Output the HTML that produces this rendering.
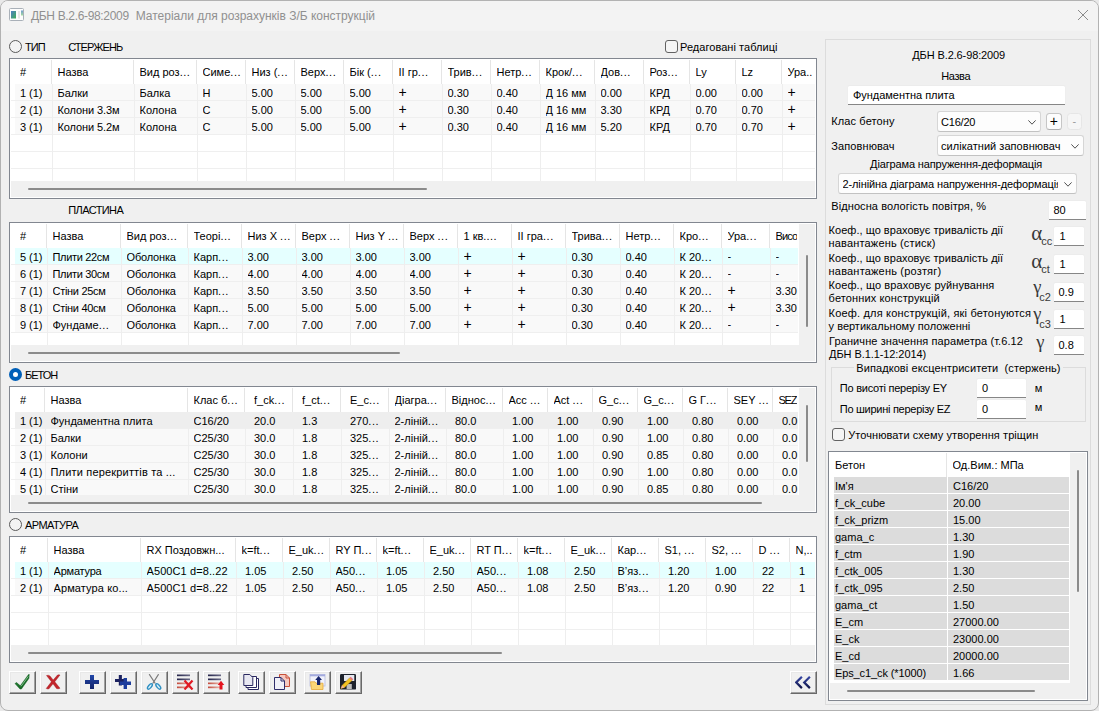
<!DOCTYPE html><html lang="uk"><head><meta charset="utf-8"><title>ДБН В.2.6-98:2009</title><style>
*{box-sizing:border-box;margin:0;padding:0}
html,body{width:1099px;height:711px;overflow:hidden;background:#e9e9e9;}
body{font-family:"Liberation Sans","DejaVu Sans",sans-serif;font-size:11px;color:#000;position:relative;line-height:13px}
.a{position:absolute;white-space:nowrap}
#win{position:absolute;left:0;top:0;width:1099px;height:711px;background:#f0f0f0;border:1px solid #b2b2b2;border-radius:8px;overflow:hidden}
#tb{position:absolute;left:0;top:0;width:1097px;height:30px;background:#f3f3f3}
#title{position:absolute;left:30px;top:7.5px;font-size:12px;line-height:15px;color:#909090;white-space:pre}
.fr{position:absolute;border:1px solid #828790;background:#fff;overflow:hidden}
.c{position:absolute;white-space:pre;overflow:hidden;height:17px;line-height:13px;padding-top:3px}
.h{position:absolute;white-space:pre;overflow:hidden;height:24px;line-height:13px;padding-top:6px}
.pl{font-size:14px;line-height:13px;position:relative;top:-0.7px;left:0px}
.d{letter-spacing:0.55px}
.vl{position:absolute;width:1px;background:#eeeeee}
.hl{position:absolute;height:1px;background:#efefef}
.hs{position:absolute;width:1px;background:#e5e5e5}
.rb{position:absolute;height:16px;background:#f9f9f9}
.sb{position:absolute;background:#f0f0f0}
.th{position:absolute;background:#8b8b8b;border-radius:1px}
.radio{position:absolute;width:13px;height:13px;border:1px solid #5a5a5a;border-radius:50%;background:#f3f3f3}
.radio.on{border:4px solid #005fb8;background:#fff;}
.chk{position:absolute;width:13px;height:13px;border:1px solid #626262;border-radius:3px;background:#f5f5f5}
.inp{position:absolute;background:#fff;border-bottom:1px solid #868686;border-radius:1.5px 1.5px 0.5px 0.5px;padding-left:5px;white-space:nowrap;box-shadow:0 -0.5px 0 0.5px #ececec}
.cmb{position:absolute;background:#fdfdfd;border:1px solid #d6d6d6;border-bottom-color:#c2c2c2;border-radius:3px;white-space:nowrap;overflow:hidden}
.btn3{position:absolute;width:27px;height:23px;background:#f0f0f0;border-top:1px solid #fff;border-left:1px solid #fff;border-right:1px solid #696969;border-bottom:1px solid #696969;box-shadow:inset -1px -1px 0 #a0a0a0, inset 1px 1px 0 #e8e8e8}
.btn3 svg{position:absolute;left:4px;top:2px}
</style></head><body><div id="win">
<div id="tb"></div>
<svg class="a" style="left:8px;top:7px" width="15" height="13" viewBox="0 0 15 13">
<defs><linearGradient id="g1" x1="0" y1="0" x2="1" y2="1"><stop offset="0" stop-color="#4f7fc4"/><stop offset="1" stop-color="#3fae57"/></linearGradient>
<linearGradient id="g2" x1="0" y1="0" x2="0" y2="1"><stop offset="0" stop-color="#6f9bd0"/><stop offset="1" stop-color="#a5dca0"/></linearGradient></defs>
<rect x="0.5" y="0.5" width="14" height="12" rx="1" fill="#fdfdfd" stroke="#a9b0b8"/>
<rect x="2" y="3" width="5" height="7.500" fill="url(#g1)"/><rect x="9" y="3" width="2" height="7.500" fill="#e6e6e6"/><rect x="12" y="2.500" width="2" height="5" fill="url(#g2)"/></svg>
<div id="title"><span style="letter-spacing:-0.333px">ДБН В.2.6-98:2009</span><span style="position:absolute;left:104.75px;top:0;letter-spacing:-0.013px">Матеріали для розрахунків З/Б конструкцій</span></div>
<svg class="a" style="left:1076px;top:8px" width="12" height="12" viewBox="0 0 12 12"><path d="M1 1 L11 11 M11 1 L1 11" stroke="#8a8a8a" stroke-width="1" fill="none"/></svg>
<div class="radio" style="left:8px;top:39px;"></div>
<div class="a" style="left:24px;top:40px;letter-spacing:-0.916px;">ТИП</div>
<div class="a" style="left:67.2px;top:40px;letter-spacing:-0.939px;">СТЕРЖЕНЬ</div>
<div class="chk" style="left:664px;top:39px;"></div>
<div class="a" style="left:679px;top:40px;letter-spacing:0.043px;">Редаговані таблиці</div>
<div class="fr" style="left:8px;top:57px;width:808px;height:141px">
<div class="h" style="left:9.9px;top:1px;width:30.1px">#</div>
<div class="hs" style="left:41px;top:1px;height:24px"></div>
<div class="h" style="left:47.5px;top:1px;width:74.5px">Назва</div>
<div class="hs" style="left:123px;top:1px;height:24px"></div>
<div class="h" style="left:129.5px;top:1px;width:55.5px">Вид роз<span class="d">...</span></div>
<div class="hs" style="left:186px;top:1px;height:24px"></div>
<div class="h" style="left:192.5px;top:1px;width:41.5px">Симе<span class="d">...</span></div>
<div class="hs" style="left:235px;top:1px;height:24px"></div>
<div class="h" style="left:241.5px;top:1px;width:41.5px">Низ (<span class="d">...</span></div>
<div class="hs" style="left:284px;top:1px;height:24px"></div>
<div class="h" style="left:290.5px;top:1px;width:41.5px">Верх<span class="d">...</span></div>
<div class="hs" style="left:333px;top:1px;height:24px"></div>
<div class="h" style="left:339.5px;top:1px;width:41.5px">Бік (<span class="d">...</span></div>
<div class="hs" style="left:382px;top:1px;height:24px"></div>
<div class="h" style="left:388.5px;top:1px;width:41.5px">II гр<span class="d">...</span></div>
<div class="hs" style="left:431px;top:1px;height:24px"></div>
<div class="h" style="left:437.5px;top:1px;width:41.5px">Трив<span class="d">...</span></div>
<div class="hs" style="left:480px;top:1px;height:24px"></div>
<div class="h" style="left:486.5px;top:1px;width:41.5px">Нетр<span class="d">...</span></div>
<div class="hs" style="left:529px;top:1px;height:24px"></div>
<div class="h" style="left:535.5px;top:1px;width:47.5px">Крок/<span class="d">...</span></div>
<div class="hs" style="left:584px;top:1px;height:24px"></div>
<div class="h" style="left:590.5px;top:1px;width:41.5px">Дов<span class="d">...</span></div>
<div class="hs" style="left:633px;top:1px;height:24px"></div>
<div class="h" style="left:639.5px;top:1px;width:38.5px">Роз<span class="d">...</span></div>
<div class="hs" style="left:679px;top:1px;height:24px"></div>
<div class="h" style="left:685.5px;top:1px;width:38.5px">Ly</div>
<div class="hs" style="left:725px;top:1px;height:24px"></div>
<div class="h" style="left:731.5px;top:1px;width:38.5px">Lz</div>
<div class="hs" style="left:771px;top:1px;height:24px"></div>
<div class="h" style="left:777.5px;top:1px;width:26.5px">Ура..</div>
<div class="rb" style="left:5px;top:25px;width:800px;height:16px;background:#f9f9f9"></div>
<div class="hl" style="left:1px;top:41px;width:804px"></div>
<div class="rb" style="left:5px;top:42px;width:800px;height:16px;background:#f9f9f9"></div>
<div class="hl" style="left:1px;top:58px;width:804px"></div>
<div class="rb" style="left:5px;top:59px;width:800px;height:16px;background:#f9f9f9"></div>
<div class="hl" style="left:1px;top:75px;width:804px"></div>
<div class="hl" style="left:1px;top:92px;width:804px"></div>
<div class="hl" style="left:1px;top:109px;width:804px"></div>
<div class="vl" style="left:42px;top:25px;height:97px"></div>
<div class="vl" style="left:124px;top:25px;height:97px"></div>
<div class="vl" style="left:187px;top:25px;height:97px"></div>
<div class="vl" style="left:236px;top:25px;height:97px"></div>
<div class="vl" style="left:285px;top:25px;height:97px"></div>
<div class="vl" style="left:334px;top:25px;height:97px"></div>
<div class="vl" style="left:383px;top:25px;height:97px"></div>
<div class="vl" style="left:432px;top:25px;height:97px"></div>
<div class="vl" style="left:481px;top:25px;height:97px"></div>
<div class="vl" style="left:530px;top:25px;height:97px"></div>
<div class="vl" style="left:585px;top:25px;height:97px"></div>
<div class="vl" style="left:634px;top:25px;height:97px"></div>
<div class="vl" style="left:680px;top:25px;height:97px"></div>
<div class="vl" style="left:726px;top:25px;height:97px"></div>
<div class="vl" style="left:772px;top:25px;height:97px"></div>
<div class="c" style="left:9.9px;top:25px;width:31.1px;height:17px">1 (1)</div>
<div class="c" style="left:47.5px;top:25px;width:75.5px;height:17px">Балки</div>
<div class="c" style="left:129.5px;top:25px;width:56.5px;height:17px">Балка</div>
<div class="c" style="left:192.5px;top:25px;width:42.5px;height:17px">Н</div>
<div class="c" style="left:241.5px;top:25px;width:42.5px;height:17px">5.00</div>
<div class="c" style="left:290.5px;top:25px;width:42.5px;height:17px">5.00</div>
<div class="c" style="left:339.5px;top:25px;width:42.5px;height:17px">5.00</div>
<div class="c" style="left:388.5px;top:25px;width:42.5px;height:17px"><span class="pl">+</span></div>
<div class="c" style="left:437.5px;top:25px;width:42.5px;height:17px">0.30</div>
<div class="c" style="left:486.5px;top:25px;width:42.5px;height:17px">0.40</div>
<div class="c" style="left:535.5px;top:25px;width:48.5px;height:17px">Д 16 мм</div>
<div class="c" style="left:590.5px;top:25px;width:42.5px;height:17px">0.00</div>
<div class="c" style="left:639.5px;top:25px;width:39.5px;height:17px">КРД</div>
<div class="c" style="left:685.5px;top:25px;width:39.5px;height:17px">0.00</div>
<div class="c" style="left:731.5px;top:25px;width:39.5px;height:17px">0.00</div>
<div class="c" style="left:777.5px;top:25px;width:27.5px;height:17px"><span class="pl">+</span></div>
<div class="c" style="left:9.9px;top:42px;width:31.1px;height:17px">2 (1)</div>
<div class="c" style="left:47.5px;top:42px;width:75.5px;height:17px"><span style="letter-spacing:-0.098px">Колони 3.3м</span></div>
<div class="c" style="left:129.5px;top:42px;width:56.5px;height:17px">Колона</div>
<div class="c" style="left:192.5px;top:42px;width:42.5px;height:17px">С</div>
<div class="c" style="left:241.5px;top:42px;width:42.5px;height:17px">5.00</div>
<div class="c" style="left:290.5px;top:42px;width:42.5px;height:17px">5.00</div>
<div class="c" style="left:339.5px;top:42px;width:42.5px;height:17px">5.00</div>
<div class="c" style="left:388.5px;top:42px;width:42.5px;height:17px"><span class="pl">+</span></div>
<div class="c" style="left:437.5px;top:42px;width:42.5px;height:17px">0.30</div>
<div class="c" style="left:486.5px;top:42px;width:42.5px;height:17px">0.40</div>
<div class="c" style="left:535.5px;top:42px;width:48.5px;height:17px">Д 16 мм</div>
<div class="c" style="left:590.5px;top:42px;width:42.5px;height:17px">3.30</div>
<div class="c" style="left:639.5px;top:42px;width:39.5px;height:17px">КРД</div>
<div class="c" style="left:685.5px;top:42px;width:39.5px;height:17px">0.70</div>
<div class="c" style="left:731.5px;top:42px;width:39.5px;height:17px">0.70</div>
<div class="c" style="left:777.5px;top:42px;width:27.5px;height:17px"><span class="pl">+</span></div>
<div class="c" style="left:9.9px;top:59px;width:31.1px;height:17px">3 (1)</div>
<div class="c" style="left:47.5px;top:59px;width:75.5px;height:17px"><span style="letter-spacing:-0.098px">Колони 5.2м</span></div>
<div class="c" style="left:129.5px;top:59px;width:56.5px;height:17px">Колона</div>
<div class="c" style="left:192.5px;top:59px;width:42.5px;height:17px">С</div>
<div class="c" style="left:241.5px;top:59px;width:42.5px;height:17px">5.00</div>
<div class="c" style="left:290.5px;top:59px;width:42.5px;height:17px">5.00</div>
<div class="c" style="left:339.5px;top:59px;width:42.5px;height:17px">5.00</div>
<div class="c" style="left:388.5px;top:59px;width:42.5px;height:17px"><span class="pl">+</span></div>
<div class="c" style="left:437.5px;top:59px;width:42.5px;height:17px">0.30</div>
<div class="c" style="left:486.5px;top:59px;width:42.5px;height:17px">0.40</div>
<div class="c" style="left:535.5px;top:59px;width:48.5px;height:17px">Д 16 мм</div>
<div class="c" style="left:590.5px;top:59px;width:42.5px;height:17px">5.20</div>
<div class="c" style="left:639.5px;top:59px;width:39.5px;height:17px">КРД</div>
<div class="c" style="left:685.5px;top:59px;width:39.5px;height:17px">0.70</div>
<div class="c" style="left:731.5px;top:59px;width:39.5px;height:17px">0.70</div>
<div class="c" style="left:777.5px;top:59px;width:27.5px;height:17px"><span class="pl">+</span></div>
<div class="sb" style="left:1px;top:122px;width:804px;height:16px"></div>
<div class="th" style="left:18px;top:129px;width:399px;height:2px"></div>
</div>
<div class="a" style="left:67.2px;top:203px;letter-spacing:-0.590px;">ПЛАСТИНА</div>
<div class="fr" style="left:8px;top:221px;width:808px;height:141px">
<div class="h" style="left:9.9px;top:1px;width:25.1px">#</div>
<div class="hs" style="left:36px;top:1px;height:24px"></div>
<div class="h" style="left:42.5px;top:1px;width:66.5px">Назва</div>
<div class="hs" style="left:110px;top:1px;height:24px"></div>
<div class="h" style="left:116.5px;top:1px;width:59.5px">Вид роз<span class="d">...</span></div>
<div class="hs" style="left:177px;top:1px;height:24px"></div>
<div class="h" style="left:183.5px;top:1px;width:46.5px">Теорі<span class="d">...</span></div>
<div class="hs" style="left:231px;top:1px;height:24px"></div>
<div class="h" style="left:237.5px;top:1px;width:46.5px">Низ X <span class="d">...</span></div>
<div class="hs" style="left:285px;top:1px;height:24px"></div>
<div class="h" style="left:291.5px;top:1px;width:46.5px">Верх <span class="d">...</span></div>
<div class="hs" style="left:339px;top:1px;height:24px"></div>
<div class="h" style="left:345.5px;top:1px;width:46.5px">Низ Y <span class="d">...</span></div>
<div class="hs" style="left:393px;top:1px;height:24px"></div>
<div class="h" style="left:399.5px;top:1px;width:46.5px">Верх <span class="d">...</span></div>
<div class="hs" style="left:447px;top:1px;height:24px"></div>
<div class="h" style="left:453.5px;top:1px;width:46.5px">1 кв.<span class="d">...</span></div>
<div class="hs" style="left:501px;top:1px;height:24px"></div>
<div class="h" style="left:507.5px;top:1px;width:46.5px">II гра<span class="d">...</span></div>
<div class="hs" style="left:555px;top:1px;height:24px"></div>
<div class="h" style="left:561.5px;top:1px;width:46.5px">Трива<span class="d">...</span></div>
<div class="hs" style="left:609px;top:1px;height:24px"></div>
<div class="h" style="left:615.5px;top:1px;width:46.5px">Нетр<span class="d">...</span></div>
<div class="hs" style="left:663px;top:1px;height:24px"></div>
<div class="h" style="left:669.5px;top:1px;width:40.5px">Кро<span class="d">...</span></div>
<div class="hs" style="left:711px;top:1px;height:24px"></div>
<div class="h" style="left:717.5px;top:1px;width:40.5px">Ура<span class="d">...</span></div>
<div class="hs" style="left:759px;top:1px;height:24px"></div>
<div class="h" style="left:765.5px;top:1px;width:21.5px"><span style="letter-spacing:-0.859px">Висо</span></div>
<div class="rb" style="left:5px;top:25px;width:783px;height:16px;background:#e5ffff"></div>
<div class="hl" style="left:1px;top:41px;width:787px"></div>
<div class="rb" style="left:5px;top:42px;width:783px;height:16px;background:#f9f9f9"></div>
<div class="hl" style="left:1px;top:58px;width:787px"></div>
<div class="rb" style="left:5px;top:59px;width:783px;height:16px;background:#f9f9f9"></div>
<div class="hl" style="left:1px;top:75px;width:787px"></div>
<div class="rb" style="left:5px;top:76px;width:783px;height:16px;background:#f9f9f9"></div>
<div class="hl" style="left:1px;top:92px;width:787px"></div>
<div class="rb" style="left:5px;top:93px;width:783px;height:16px;background:#f9f9f9"></div>
<div class="hl" style="left:1px;top:109px;width:787px"></div>
<div class="vl" style="left:37px;top:25px;height:97px"></div>
<div class="vl" style="left:111px;top:25px;height:97px"></div>
<div class="vl" style="left:178px;top:25px;height:97px"></div>
<div class="vl" style="left:232px;top:25px;height:97px"></div>
<div class="vl" style="left:286px;top:25px;height:97px"></div>
<div class="vl" style="left:340px;top:25px;height:97px"></div>
<div class="vl" style="left:394px;top:25px;height:97px"></div>
<div class="vl" style="left:448px;top:25px;height:97px"></div>
<div class="vl" style="left:502px;top:25px;height:97px"></div>
<div class="vl" style="left:556px;top:25px;height:97px"></div>
<div class="vl" style="left:610px;top:25px;height:97px"></div>
<div class="vl" style="left:664px;top:25px;height:97px"></div>
<div class="vl" style="left:712px;top:25px;height:97px"></div>
<div class="vl" style="left:760px;top:25px;height:97px"></div>
<div class="c" style="left:9.9px;top:25px;width:26.1px;height:17px">5 (1)</div>
<div class="c" style="left:42.5px;top:25px;width:67.5px;height:17px"><span style="letter-spacing:-0.327px">Плити 22см</span></div>
<div class="c" style="left:116.5px;top:25px;width:60.5px;height:17px"><span style="letter-spacing:-0.174px">Оболонка</span></div>
<div class="c" style="left:183.5px;top:25px;width:47.5px;height:17px">Карп<span class="d">...</span></div>
<div class="c" style="left:237.5px;top:25px;width:47.5px;height:17px">3.00</div>
<div class="c" style="left:291.5px;top:25px;width:47.5px;height:17px">3.00</div>
<div class="c" style="left:345.5px;top:25px;width:47.5px;height:17px">3.00</div>
<div class="c" style="left:399.5px;top:25px;width:47.5px;height:17px">3.00</div>
<div class="c" style="left:453.5px;top:25px;width:47.5px;height:17px"><span class="pl">+</span></div>
<div class="c" style="left:507.5px;top:25px;width:47.5px;height:17px"><span class="pl">+</span></div>
<div class="c" style="left:561.5px;top:25px;width:47.5px;height:17px">0.30</div>
<div class="c" style="left:615.5px;top:25px;width:47.5px;height:17px">0.40</div>
<div class="c" style="left:669.5px;top:25px;width:41.5px;height:17px">К 20<span class="d">...</span></div>
<div class="c" style="left:717.5px;top:25px;width:41.5px;height:17px"><span style="position:relative;top:-0.8px">-</span></div>
<div class="c" style="left:765.5px;top:25px;width:22.5px;height:17px"><span style="position:relative;top:-0.8px">-</span></div>
<div class="c" style="left:9.9px;top:42px;width:26.1px;height:17px">6 (1)</div>
<div class="c" style="left:42.5px;top:42px;width:67.5px;height:17px"><span style="letter-spacing:-0.327px">Плити 30см</span></div>
<div class="c" style="left:116.5px;top:42px;width:60.5px;height:17px"><span style="letter-spacing:-0.174px">Оболонка</span></div>
<div class="c" style="left:183.5px;top:42px;width:47.5px;height:17px">Карп<span class="d">...</span></div>
<div class="c" style="left:237.5px;top:42px;width:47.5px;height:17px">4.00</div>
<div class="c" style="left:291.5px;top:42px;width:47.5px;height:17px">4.00</div>
<div class="c" style="left:345.5px;top:42px;width:47.5px;height:17px">4.00</div>
<div class="c" style="left:399.5px;top:42px;width:47.5px;height:17px">4.00</div>
<div class="c" style="left:453.5px;top:42px;width:47.5px;height:17px"><span class="pl">+</span></div>
<div class="c" style="left:507.5px;top:42px;width:47.5px;height:17px"><span class="pl">+</span></div>
<div class="c" style="left:561.5px;top:42px;width:47.5px;height:17px">0.30</div>
<div class="c" style="left:615.5px;top:42px;width:47.5px;height:17px">0.40</div>
<div class="c" style="left:669.5px;top:42px;width:41.5px;height:17px">К 20<span class="d">...</span></div>
<div class="c" style="left:717.5px;top:42px;width:41.5px;height:17px"><span style="position:relative;top:-0.8px">-</span></div>
<div class="c" style="left:765.5px;top:42px;width:22.5px;height:17px"><span style="position:relative;top:-0.8px">-</span></div>
<div class="c" style="left:9.9px;top:59px;width:26.1px;height:17px">7 (1)</div>
<div class="c" style="left:42.5px;top:59px;width:67.5px;height:17px"><span style="letter-spacing:-0.300px">Стіни 25см</span></div>
<div class="c" style="left:116.5px;top:59px;width:60.5px;height:17px"><span style="letter-spacing:-0.174px">Оболонка</span></div>
<div class="c" style="left:183.5px;top:59px;width:47.5px;height:17px">Карп<span class="d">...</span></div>
<div class="c" style="left:237.5px;top:59px;width:47.5px;height:17px">3.50</div>
<div class="c" style="left:291.5px;top:59px;width:47.5px;height:17px">3.50</div>
<div class="c" style="left:345.5px;top:59px;width:47.5px;height:17px">3.50</div>
<div class="c" style="left:399.5px;top:59px;width:47.5px;height:17px">3.50</div>
<div class="c" style="left:453.5px;top:59px;width:47.5px;height:17px"><span class="pl">+</span></div>
<div class="c" style="left:507.5px;top:59px;width:47.5px;height:17px"><span class="pl">+</span></div>
<div class="c" style="left:561.5px;top:59px;width:47.5px;height:17px">0.30</div>
<div class="c" style="left:615.5px;top:59px;width:47.5px;height:17px">0.40</div>
<div class="c" style="left:669.5px;top:59px;width:41.5px;height:17px">К 20<span class="d">...</span></div>
<div class="c" style="left:717.5px;top:59px;width:41.5px;height:17px"><span class="pl">+</span></div>
<div class="c" style="left:765.5px;top:59px;width:22.5px;height:17px">3.30</div>
<div class="c" style="left:9.9px;top:76px;width:26.1px;height:17px">8 (1)</div>
<div class="c" style="left:42.5px;top:76px;width:67.5px;height:17px"><span style="letter-spacing:-0.300px">Стіни 40см</span></div>
<div class="c" style="left:116.5px;top:76px;width:60.5px;height:17px"><span style="letter-spacing:-0.174px">Оболонка</span></div>
<div class="c" style="left:183.5px;top:76px;width:47.5px;height:17px">Карп<span class="d">...</span></div>
<div class="c" style="left:237.5px;top:76px;width:47.5px;height:17px">5.00</div>
<div class="c" style="left:291.5px;top:76px;width:47.5px;height:17px">5.00</div>
<div class="c" style="left:345.5px;top:76px;width:47.5px;height:17px">5.00</div>
<div class="c" style="left:399.5px;top:76px;width:47.5px;height:17px">5.00</div>
<div class="c" style="left:453.5px;top:76px;width:47.5px;height:17px"><span class="pl">+</span></div>
<div class="c" style="left:507.5px;top:76px;width:47.5px;height:17px"><span class="pl">+</span></div>
<div class="c" style="left:561.5px;top:76px;width:47.5px;height:17px">0.30</div>
<div class="c" style="left:615.5px;top:76px;width:47.5px;height:17px">0.40</div>
<div class="c" style="left:669.5px;top:76px;width:41.5px;height:17px">К 20<span class="d">...</span></div>
<div class="c" style="left:717.5px;top:76px;width:41.5px;height:17px"><span class="pl">+</span></div>
<div class="c" style="left:765.5px;top:76px;width:22.5px;height:17px">3.30</div>
<div class="c" style="left:9.9px;top:93px;width:26.1px;height:17px">9 (1)</div>
<div class="c" style="left:42.5px;top:93px;width:67.5px;height:17px">Фундаме<span class="d">...</span></div>
<div class="c" style="left:116.5px;top:93px;width:60.5px;height:17px"><span style="letter-spacing:-0.174px">Оболонка</span></div>
<div class="c" style="left:183.5px;top:93px;width:47.5px;height:17px">Карп<span class="d">...</span></div>
<div class="c" style="left:237.5px;top:93px;width:47.5px;height:17px">7.00</div>
<div class="c" style="left:291.5px;top:93px;width:47.5px;height:17px">7.00</div>
<div class="c" style="left:345.5px;top:93px;width:47.5px;height:17px">7.00</div>
<div class="c" style="left:399.5px;top:93px;width:47.5px;height:17px">7.00</div>
<div class="c" style="left:453.5px;top:93px;width:47.5px;height:17px"><span class="pl">+</span></div>
<div class="c" style="left:507.5px;top:93px;width:47.5px;height:17px"><span class="pl">+</span></div>
<div class="c" style="left:561.5px;top:93px;width:47.5px;height:17px">0.30</div>
<div class="c" style="left:615.5px;top:93px;width:47.5px;height:17px">0.40</div>
<div class="c" style="left:669.5px;top:93px;width:41.5px;height:17px">К 20<span class="d">...</span></div>
<div class="c" style="left:717.5px;top:93px;width:41.5px;height:17px"><span style="position:relative;top:-0.8px">-</span></div>
<div class="c" style="left:765.5px;top:93px;width:22.5px;height:17px"><span style="position:relative;top:-0.8px">-</span></div>
<div class="sb" style="left:1px;top:122px;width:804px;height:16px"></div>
<div class="sb" style="left:789px;top:1px;width:16px;height:137px"></div>
<div class="th" style="left:796px;top:32px;width:2px;height:72px"></div>
<div class="th" style="left:18px;top:129px;width:372px;height:2px"></div>
</div>
<div class="radio on" style="left:8px;top:367px;"></div>
<div class="a" style="left:24px;top:368.3px;letter-spacing:-0.996px;">БЕТОН</div>
<div class="fr" style="left:8px;top:385px;width:808px;height:127px">
<div class="h" style="left:9.9px;top:1px;width:23.1px">#</div>
<div class="hs" style="left:34px;top:1px;height:24px"></div>
<div class="h" style="left:40.5px;top:1px;width:135.5px">Назва</div>
<div class="hs" style="left:177px;top:1px;height:24px"></div>
<div class="h" style="left:183.5px;top:1px;width:49.5px">Клас б<span class="d">...</span></div>
<div class="hs" style="left:234px;top:1px;height:24px"></div>
<div class="h" style="left:244px;top:1px;width:37px">f_ck<span class="d">...</span></div>
<div class="hs" style="left:282px;top:1px;height:24px"></div>
<div class="h" style="left:292px;top:1px;width:37px">f_ct<span class="d">...</span></div>
<div class="hs" style="left:330px;top:1px;height:24px"></div>
<div class="h" style="left:340px;top:1px;width:37px">E_c<span class="d">...</span></div>
<div class="hs" style="left:378px;top:1px;height:24px"></div>
<div class="h" style="left:384.5px;top:1px;width:49.5px">Діагра<span class="d">...</span></div>
<div class="hs" style="left:435px;top:1px;height:24px"></div>
<div class="h" style="left:441.5px;top:1px;width:49.5px">Віднос<span class="d">...</span></div>
<div class="hs" style="left:492px;top:1px;height:24px"></div>
<div class="h" style="left:498.5px;top:1px;width:37.5px">Acc <span class="d">...</span></div>
<div class="hs" style="left:537px;top:1px;height:24px"></div>
<div class="h" style="left:543.5px;top:1px;width:37.5px">Act <span class="d">...</span></div>
<div class="hs" style="left:582px;top:1px;height:24px"></div>
<div class="h" style="left:588.5px;top:1px;width:37.5px">G_c<span class="d">...</span></div>
<div class="hs" style="left:627px;top:1px;height:24px"></div>
<div class="h" style="left:633.5px;top:1px;width:37.5px">G_c<span class="d">...</span></div>
<div class="hs" style="left:672px;top:1px;height:24px"></div>
<div class="h" style="left:678.5px;top:1px;width:37.5px">G Г<span class="d">...</span></div>
<div class="hs" style="left:717px;top:1px;height:24px"></div>
<div class="h" style="left:723.5px;top:1px;width:37.5px">SEY <span class="d">...</span></div>
<div class="hs" style="left:762px;top:1px;height:24px"></div>
<div class="h" style="left:768.5px;top:1px;width:18.5px"><span style="letter-spacing:-1.269px">SEZ</span></div>
<div class="rb" style="left:5px;top:25px;width:783px;height:16px;background:#eeeeee"></div>
<div class="hl" style="left:1px;top:41px;width:787px"></div>
<div class="rb" style="left:5px;top:42px;width:783px;height:16px;background:#f9f9f9"></div>
<div class="hl" style="left:1px;top:58px;width:787px"></div>
<div class="rb" style="left:5px;top:59px;width:783px;height:16px;background:#f9f9f9"></div>
<div class="hl" style="left:1px;top:75px;width:787px"></div>
<div class="rb" style="left:5px;top:76px;width:783px;height:16px;background:#f9f9f9"></div>
<div class="hl" style="left:1px;top:92px;width:787px"></div>
<div class="rb" style="left:5px;top:93px;width:783px;height:15px;background:#f9f9f9"></div>
<div class="vl" style="left:35px;top:25px;height:83px"></div>
<div class="vl" style="left:178px;top:25px;height:83px"></div>
<div class="vl" style="left:235px;top:25px;height:83px"></div>
<div class="vl" style="left:283px;top:25px;height:83px"></div>
<div class="vl" style="left:331px;top:25px;height:83px"></div>
<div class="vl" style="left:379px;top:25px;height:83px"></div>
<div class="vl" style="left:436px;top:25px;height:83px"></div>
<div class="vl" style="left:493px;top:25px;height:83px"></div>
<div class="vl" style="left:538px;top:25px;height:83px"></div>
<div class="vl" style="left:583px;top:25px;height:83px"></div>
<div class="vl" style="left:628px;top:25px;height:83px"></div>
<div class="vl" style="left:673px;top:25px;height:83px"></div>
<div class="vl" style="left:718px;top:25px;height:83px"></div>
<div class="vl" style="left:763px;top:25px;height:83px"></div>
<div class="c" style="left:9.9px;top:25px;width:24.1px;height:17px">1 (1)</div>
<div class="c" style="left:40.5px;top:25px;width:136.5px;height:17px">Фундаментна плита</div>
<div class="c" style="left:183.5px;top:25px;width:50.5px;height:17px">C16/20</div>
<div class="c" style="left:244px;top:25px;width:38px;height:17px">20.0</div>
<div class="c" style="left:292px;top:25px;width:38px;height:17px">1.3</div>
<div class="c" style="left:340px;top:25px;width:38px;height:17px">270<span class="d">...</span></div>
<div class="c" style="left:384.5px;top:25px;width:50.5px;height:17px">2-ліній<span class="d">...</span></div>
<div class="c" style="left:445px;top:25px;width:47px;height:17px">80.0</div>
<div class="c" style="left:502px;top:25px;width:35px;height:17px">1.00</div>
<div class="c" style="left:547px;top:25px;width:35px;height:17px">1.00</div>
<div class="c" style="left:592px;top:25px;width:35px;height:17px">0.90</div>
<div class="c" style="left:637px;top:25px;width:35px;height:17px">1.00</div>
<div class="c" style="left:682px;top:25px;width:35px;height:17px">0.80</div>
<div class="c" style="left:727px;top:25px;width:35px;height:17px">0.00</div>
<div class="c" style="left:772px;top:25px;width:16px;height:17px">0.0</div>
<div class="c" style="left:9.9px;top:42px;width:24.1px;height:17px">2 (1)</div>
<div class="c" style="left:40.5px;top:42px;width:136.5px;height:17px">Балки</div>
<div class="c" style="left:183.5px;top:42px;width:50.5px;height:17px">C25/30</div>
<div class="c" style="left:244px;top:42px;width:38px;height:17px">30.0</div>
<div class="c" style="left:292px;top:42px;width:38px;height:17px">1.8</div>
<div class="c" style="left:340px;top:42px;width:38px;height:17px">325<span class="d">...</span></div>
<div class="c" style="left:384.5px;top:42px;width:50.5px;height:17px">2-ліній<span class="d">...</span></div>
<div class="c" style="left:445px;top:42px;width:47px;height:17px">80.0</div>
<div class="c" style="left:502px;top:42px;width:35px;height:17px">1.00</div>
<div class="c" style="left:547px;top:42px;width:35px;height:17px">1.00</div>
<div class="c" style="left:592px;top:42px;width:35px;height:17px">0.90</div>
<div class="c" style="left:637px;top:42px;width:35px;height:17px">1.00</div>
<div class="c" style="left:682px;top:42px;width:35px;height:17px">0.80</div>
<div class="c" style="left:727px;top:42px;width:35px;height:17px">0.00</div>
<div class="c" style="left:772px;top:42px;width:16px;height:17px">0.0</div>
<div class="c" style="left:9.9px;top:59px;width:24.1px;height:17px">3 (1)</div>
<div class="c" style="left:40.5px;top:59px;width:136.5px;height:17px">Колони</div>
<div class="c" style="left:183.5px;top:59px;width:50.5px;height:17px">C25/30</div>
<div class="c" style="left:244px;top:59px;width:38px;height:17px">30.0</div>
<div class="c" style="left:292px;top:59px;width:38px;height:17px">1.8</div>
<div class="c" style="left:340px;top:59px;width:38px;height:17px">325<span class="d">...</span></div>
<div class="c" style="left:384.5px;top:59px;width:50.5px;height:17px">2-ліній<span class="d">...</span></div>
<div class="c" style="left:445px;top:59px;width:47px;height:17px">80.0</div>
<div class="c" style="left:502px;top:59px;width:35px;height:17px">1.00</div>
<div class="c" style="left:547px;top:59px;width:35px;height:17px">1.00</div>
<div class="c" style="left:592px;top:59px;width:35px;height:17px">0.90</div>
<div class="c" style="left:637px;top:59px;width:35px;height:17px">0.85</div>
<div class="c" style="left:682px;top:59px;width:35px;height:17px">0.80</div>
<div class="c" style="left:727px;top:59px;width:35px;height:17px">0.00</div>
<div class="c" style="left:772px;top:59px;width:16px;height:17px">0.0</div>
<div class="c" style="left:9.9px;top:76px;width:24.1px;height:17px">4 (1)</div>
<div class="c" style="left:40.5px;top:76px;width:136.5px;height:17px"><span style="letter-spacing:0.176px">Плити перекриттів та ...</span></div>
<div class="c" style="left:183.5px;top:76px;width:50.5px;height:17px">C25/30</div>
<div class="c" style="left:244px;top:76px;width:38px;height:17px">30.0</div>
<div class="c" style="left:292px;top:76px;width:38px;height:17px">1.8</div>
<div class="c" style="left:340px;top:76px;width:38px;height:17px">325<span class="d">...</span></div>
<div class="c" style="left:384.5px;top:76px;width:50.5px;height:17px">2-ліній<span class="d">...</span></div>
<div class="c" style="left:445px;top:76px;width:47px;height:17px">80.0</div>
<div class="c" style="left:502px;top:76px;width:35px;height:17px">1.00</div>
<div class="c" style="left:547px;top:76px;width:35px;height:17px">1.00</div>
<div class="c" style="left:592px;top:76px;width:35px;height:17px">0.90</div>
<div class="c" style="left:637px;top:76px;width:35px;height:17px">1.00</div>
<div class="c" style="left:682px;top:76px;width:35px;height:17px">0.80</div>
<div class="c" style="left:727px;top:76px;width:35px;height:17px">0.00</div>
<div class="c" style="left:772px;top:76px;width:16px;height:17px">0.0</div>
<div class="c" style="left:9.9px;top:93px;width:24.1px;height:15px">5 (1)</div>
<div class="c" style="left:40.5px;top:93px;width:136.5px;height:15px">Стіни</div>
<div class="c" style="left:183.5px;top:93px;width:50.5px;height:15px">C25/30</div>
<div class="c" style="left:244px;top:93px;width:38px;height:15px">30.0</div>
<div class="c" style="left:292px;top:93px;width:38px;height:15px">1.8</div>
<div class="c" style="left:340px;top:93px;width:38px;height:15px">325<span class="d">...</span></div>
<div class="c" style="left:384.5px;top:93px;width:50.5px;height:15px">2-ліній<span class="d">...</span></div>
<div class="c" style="left:445px;top:93px;width:47px;height:15px">80.0</div>
<div class="c" style="left:502px;top:93px;width:35px;height:15px">1.00</div>
<div class="c" style="left:547px;top:93px;width:35px;height:15px">1.00</div>
<div class="c" style="left:592px;top:93px;width:35px;height:15px">0.90</div>
<div class="c" style="left:637px;top:93px;width:35px;height:15px">0.85</div>
<div class="c" style="left:682px;top:93px;width:35px;height:15px">0.80</div>
<div class="c" style="left:727px;top:93px;width:35px;height:15px">0.00</div>
<div class="c" style="left:772px;top:93px;width:16px;height:15px">0.0</div>
<div class="sb" style="left:1px;top:108px;width:804px;height:16px"></div>
<div class="sb" style="left:789px;top:1px;width:16px;height:123px"></div>
<div class="th" style="left:796px;top:18px;width:2px;height:57px"></div>
<div class="th" style="left:18px;top:115px;width:734px;height:2px"></div>
</div>
<div class="radio" style="left:8px;top:517px;"></div>
<div class="a" style="left:24px;top:518.3px;letter-spacing:-0.568px;">АРМАТУРА</div>
<div class="fr" style="left:8px;top:535px;width:808px;height:127px">
<div class="h" style="left:9.9px;top:1px;width:26.1px">#</div>
<div class="hs" style="left:37px;top:1px;height:24px"></div>
<div class="h" style="left:43.5px;top:1px;width:85.5px">Назва</div>
<div class="hs" style="left:130px;top:1px;height:24px"></div>
<div class="h" style="left:136.5px;top:1px;width:87.5px"><span style="letter-spacing:0.007px">RX Поздовжн...</span></div>
<div class="hs" style="left:225px;top:1px;height:24px"></div>
<div class="h" style="left:231.5px;top:1px;width:39.5px">k=ft<span class="d">...</span></div>
<div class="hs" style="left:272px;top:1px;height:24px"></div>
<div class="h" style="left:278.5px;top:1px;width:39.5px">E_uk<span class="d">...</span></div>
<div class="hs" style="left:319px;top:1px;height:24px"></div>
<div class="h" style="left:325.5px;top:1px;width:39.5px">RY П<span class="d">...</span></div>
<div class="hs" style="left:366px;top:1px;height:24px"></div>
<div class="h" style="left:372.5px;top:1px;width:39.5px">k=ft<span class="d">...</span></div>
<div class="hs" style="left:413px;top:1px;height:24px"></div>
<div class="h" style="left:419.5px;top:1px;width:39.5px">E_uk<span class="d">...</span></div>
<div class="hs" style="left:460px;top:1px;height:24px"></div>
<div class="h" style="left:466.5px;top:1px;width:39.5px">RT П<span class="d">...</span></div>
<div class="hs" style="left:507px;top:1px;height:24px"></div>
<div class="h" style="left:513.5px;top:1px;width:39.5px">k=ft<span class="d">...</span></div>
<div class="hs" style="left:554px;top:1px;height:24px"></div>
<div class="h" style="left:560.5px;top:1px;width:39.5px">E_uk<span class="d">...</span></div>
<div class="hs" style="left:601px;top:1px;height:24px"></div>
<div class="h" style="left:607.5px;top:1px;width:39.5px">Кар<span class="d">...</span></div>
<div class="hs" style="left:648px;top:1px;height:24px"></div>
<div class="h" style="left:654.5px;top:1px;width:39.5px">S1, <span class="d">...</span></div>
<div class="hs" style="left:695px;top:1px;height:24px"></div>
<div class="h" style="left:701.5px;top:1px;width:39.5px">S2, <span class="d">...</span></div>
<div class="hs" style="left:742px;top:1px;height:24px"></div>
<div class="h" style="left:748.5px;top:1px;width:29.5px">D <span class="d">...</span></div>
<div class="hs" style="left:779px;top:1px;height:24px"></div>
<div class="h" style="left:785.5px;top:1px;width:18.5px">N,..</div>
<div class="rb" style="left:5px;top:25px;width:800px;height:16px;background:#e5ffff"></div>
<div class="hl" style="left:1px;top:41px;width:804px"></div>
<div class="rb" style="left:5px;top:42px;width:800px;height:16px;background:#f9f9f9"></div>
<div class="hl" style="left:1px;top:58px;width:804px"></div>
<div class="hl" style="left:1px;top:75px;width:804px"></div>
<div class="hl" style="left:1px;top:92px;width:804px"></div>
<div class="vl" style="left:38px;top:25px;height:83px"></div>
<div class="vl" style="left:131px;top:25px;height:83px"></div>
<div class="vl" style="left:226px;top:25px;height:83px"></div>
<div class="vl" style="left:273px;top:25px;height:83px"></div>
<div class="vl" style="left:320px;top:25px;height:83px"></div>
<div class="vl" style="left:367px;top:25px;height:83px"></div>
<div class="vl" style="left:414px;top:25px;height:83px"></div>
<div class="vl" style="left:461px;top:25px;height:83px"></div>
<div class="vl" style="left:508px;top:25px;height:83px"></div>
<div class="vl" style="left:555px;top:25px;height:83px"></div>
<div class="vl" style="left:602px;top:25px;height:83px"></div>
<div class="vl" style="left:649px;top:25px;height:83px"></div>
<div class="vl" style="left:696px;top:25px;height:83px"></div>
<div class="vl" style="left:743px;top:25px;height:83px"></div>
<div class="vl" style="left:780px;top:25px;height:83px"></div>
<div class="c" style="left:9.9px;top:25px;width:27.1px;height:17px">1 (1)</div>
<div class="c" style="left:43.5px;top:25px;width:86.5px;height:17px"><span style="letter-spacing:-0.209px">Арматура</span></div>
<div class="c" style="left:136.5px;top:25px;width:88.5px;height:17px"><span style="letter-spacing:0.098px">A500C1 d=8..22</span></div>
<div class="c" style="left:235px;top:25px;width:37px;height:17px">1.05</div>
<div class="c" style="left:282px;top:25px;width:37px;height:17px">2.50</div>
<div class="c" style="left:325.5px;top:25px;width:40.5px;height:17px">A50<span class="d">...</span></div>
<div class="c" style="left:376px;top:25px;width:37px;height:17px">1.05</div>
<div class="c" style="left:423px;top:25px;width:37px;height:17px">2.50</div>
<div class="c" style="left:466.5px;top:25px;width:40.5px;height:17px">A50<span class="d">...</span></div>
<div class="c" style="left:517px;top:25px;width:37px;height:17px">1.08</div>
<div class="c" style="left:564px;top:25px;width:37px;height:17px">2.50</div>
<div class="c" style="left:607.5px;top:25px;width:40.5px;height:17px">В’яз<span class="d">...</span></div>
<div class="c" style="left:658px;top:25px;width:37px;height:17px">1.20</div>
<div class="c" style="left:705px;top:25px;width:37px;height:17px">1.00</div>
<div class="c" style="left:752px;top:25px;width:27px;height:17px">22</div>
<div class="c" style="left:789px;top:25px;width:16px;height:17px">1</div>
<div class="c" style="left:9.9px;top:42px;width:27.1px;height:17px">2 (1)</div>
<div class="c" style="left:43.5px;top:42px;width:86.5px;height:17px"><span style="letter-spacing:0.110px">Арматура ко...</span></div>
<div class="c" style="left:136.5px;top:42px;width:88.5px;height:17px"><span style="letter-spacing:0.098px">A500C1 d=8..22</span></div>
<div class="c" style="left:235px;top:42px;width:37px;height:17px">1.05</div>
<div class="c" style="left:282px;top:42px;width:37px;height:17px">2.50</div>
<div class="c" style="left:325.5px;top:42px;width:40.5px;height:17px">A50<span class="d">...</span></div>
<div class="c" style="left:376px;top:42px;width:37px;height:17px">1.05</div>
<div class="c" style="left:423px;top:42px;width:37px;height:17px">2.50</div>
<div class="c" style="left:466.5px;top:42px;width:40.5px;height:17px">A50<span class="d">...</span></div>
<div class="c" style="left:517px;top:42px;width:37px;height:17px">1.08</div>
<div class="c" style="left:564px;top:42px;width:37px;height:17px">2.50</div>
<div class="c" style="left:607.5px;top:42px;width:40.5px;height:17px">В’яз<span class="d">...</span></div>
<div class="c" style="left:658px;top:42px;width:37px;height:17px">1.20</div>
<div class="c" style="left:705px;top:42px;width:37px;height:17px">0.90</div>
<div class="c" style="left:752px;top:42px;width:27px;height:17px">22</div>
<div class="c" style="left:789px;top:42px;width:16px;height:17px">1</div>
<div class="sb" style="left:1px;top:108px;width:804px;height:16px"></div>
<div class="th" style="left:18px;top:115px;width:474px;height:2px"></div>
</div>
<div class="btn3" style="left:8px;top:670px;"><svg width="17" height="16" viewBox="0 0 17 16"><defs><linearGradient id="gk" x1="0" y1="0" x2="1" y2="1"><stop offset="0" stop-color="#2a8a3a"/><stop offset="1" stop-color="#0f5a1d"/></linearGradient></defs><path d="M1 9.600 L2.500 8.500 L6.300 11.800 L14.400 0.700 L15.200 0.200 L15 4.200 L7.400 15 L6 15 Z" fill="url(#gk)" stroke="#0e5a1c" stroke-width="0.500"/><path d="M7 12.300 L14.300 2.400" stroke="#9bd6a4" stroke-width="0.900" fill="none" opacity="0.850"/></svg></div>
<div class="btn3" style="left:39px;top:670px;"><svg width="17" height="16" viewBox="0 0 17 16"><path d="M1.500 1.5 Q3.5 0.800 5 2 L8.2 6 L12.5 1 Q13.8 0.500 15 1 L9.8 7.800 L15 14.200 Q13 15.3 11.5 14.5 L8 9.8 L4 14.8 Q2.5 15.2 1.2 14.5 L6.4 7.800 Z" fill="#c3262c" stroke="#9c1a1f" stroke-width="0.4"/></svg></div>
<div class="btn3" style="left:78px;top:670px;"><svg width="17" height="16" viewBox="0 0 17 16"><defs><linearGradient id="gp" x1="0" y1="0" x2="0" y2="1"><stop offset="0" stop-color="#2146a8"/><stop offset="1" stop-color="#13246a"/></linearGradient></defs><path d="M6 1 H10 V6 H15 V10 H10 V15 H6 V10 H1 V6 H6 Z" fill="url(#gp)"/></svg></div>
<div class="btn3" style="left:109px;top:670px;"><svg width="17" height="16" viewBox="0 0 17 16"><path d="M3.800 1 H6.900 V5 H10 V8 H6.900 V11.5 H3.800 V8 H0 V5 H3.800 Z" fill="#1c2260"/><path d="M8.600 4 H12 V7.500 H16 V11 H12 V15 H8.600 V11 H5 V7.500 H8.600 Z" fill="#1d3d9c"/></svg></div>
<div class="btn3" style="left:140px;top:670px;"><svg width="17" height="16" viewBox="0 0 17 16"><path d="M3.200 0.200 L9.300 9.500 M12.600 0.200 L6.700 9.500" stroke="#7a7a7a" stroke-width="1.200" fill="none"/><ellipse cx="3.900" cy="12.400" rx="1.500" ry="3.300" transform="rotate(40 3.900 12.400)" fill="#d8eef8" stroke="#2d8fc2" stroke-width="1.400"/><ellipse cx="12.300" cy="12.400" rx="1.500" ry="3.300" transform="rotate(-40 12.300 12.400)" fill="#d8eef8" stroke="#2d8fc2" stroke-width="1.400"/></svg></div>
<div class="btn3" style="left:171px;top:670px;"><svg width="17" height="16" viewBox="0 0 17 16"><defs><linearGradient id="gd1" x1="0" y1="0" x2="1" y2="0"><stop offset="0" stop-color="#24244a"/><stop offset="1" stop-color="#6a6a86"/></linearGradient><linearGradient id="gd2" x1="0" y1="0" x2="1" y2="0"><stop offset="0" stop-color="#c24a3c"/><stop offset="1" stop-color="#ecc0b4"/></linearGradient></defs><rect x="0" y="0.5" width="13" height="1.7" fill="url(#gd1)"/><rect x="0" y="4.500" width="13" height="1.7" fill="url(#gd1)"/><rect x="0" y="8.5" width="13" height="1.7" fill="url(#gd2)"/><rect x="0" y="12.5" width="13" height="1.7" fill="url(#gd2)"/><path d="M7.500 6.500 L15.5 15.5 M15.5 6.500 L7.500 15.5" stroke="#e01b24" stroke-width="2.200" fill="none"/></svg></div>
<div class="btn3" style="left:202px;top:670px;"><svg width="17" height="16" viewBox="0 0 17 16"><defs><linearGradient id="gl1" x1="0" y1="0" x2="1" y2="0"><stop offset="0" stop-color="#24244a"/><stop offset="1" stop-color="#6a6a86"/></linearGradient><linearGradient id="gl2" x1="0" y1="0" x2="1" y2="0"><stop offset="0" stop-color="#c24a3c"/><stop offset="1" stop-color="#ecc0b4"/></linearGradient></defs><rect x="0" y="0.5" width="13" height="1.7" fill="url(#gl1)"/><rect x="0" y="4.500" width="13" height="1.7" fill="url(#gl1)"/><rect x="0" y="8.5" width="13" height="1.7" fill="url(#gl2)"/><rect x="0" y="12.5" width="13" height="1.7" fill="url(#gl2)"/><path d="M13 6.800 L16.3 11 H14.5 V15.5 H11.5 V11 H9.700 Z" fill="#e3131c"/></svg></div>
<div class="btn3" style="left:237px;top:670px;"><svg width="17" height="16" viewBox="0 0 17 16"><path d="M5 4.500 H15.500 V15.500 H5 Z" fill="#fff" stroke="#2a2860" stroke-width="1"/><path d="M3 2.500 H13.500 V13.500 H3 Z" fill="#fff" stroke="#2a2860" stroke-width="1"/><path d="M0.800 0.500 H6.800 L9.800 3.500 V11.500 H0.800 Z" fill="#e8e8f2" stroke="#2a2860" stroke-width="1"/></svg></div>
<div class="btn3" style="left:268px;top:670px;"><svg width="17" height="16" viewBox="0 0 17 16"><path d="M5.5 0.500 H12 L15.5 4 V12.5 H5.5 Z" fill="#f6c9c0" stroke="#c8503a" stroke-width="1"/><path d="M12 0.500 V4 H15.5" fill="none" stroke="#c8503a" stroke-width="1"/><path d="M0.5 3.500 H7 L10.500 7 V15.5 H0.5 Z" fill="#f0f0f8" stroke="#2f2d6b" stroke-width="1"/><path d="M7 3.500 V7 H10.500" fill="none" stroke="#2f2d6b" stroke-width="1"/></svg></div>
<div class="btn3" style="left:303px;top:670px;"><svg width="17" height="16" viewBox="0 0 17 16"><rect x="1" y="0.500" width="15" height="11.500" fill="#f1f2fb" stroke="#b4b9de" stroke-width="0.800"/><rect x="1" y="0.500" width="15" height="1.800" fill="#a3aade"/><path d="M1.500 7.800 H6 L7 9.200 H14 V15.500 H2.500 Z" fill="#fbd678" stroke="#e6a93a" stroke-width="0.800"/><path d="M9.600 2 L13 6 H11.200 V11 H8 V6 H6.200 Z" fill="#17256c"/></svg></div>
<div class="btn3" style="left:334px;top:670px;"><svg width="17" height="16" viewBox="0 0 17 16"><rect x="0" y="0" width="16" height="15.600" rx="1.200" fill="#1d222c"/><rect x="4" y="1" width="10.300" height="6" fill="#e4e7ee"/><rect x="6.600" y="10" width="5.200" height="5" fill="#bdbdbd"/><path d="M0.900 14.500 L2.200 11.200 L9.5 4 L12 6.500 L4.500 13.500 Z" fill="#f3c221" stroke="#b8860b" stroke-width="0.500"/><path d="M0.900 14.500 L2.200 11.200 L4.500 13.500 Z" fill="#f2b4a4"/><path d="M9.5 4 L10.700 2.800 L13.200 5.300 L12 6.500 Z" fill="#e8707a"/></svg></div>
<div class="btn3" style="left:789px;top:670px;"><svg width="17" height="16" viewBox="0 0 17 16"><defs><linearGradient id="gch" x1="0" y1="0" x2="0" y2="1"><stop offset="0" stop-color="#3646a4"/><stop offset="1" stop-color="#12174a"/></linearGradient></defs><path d="M6.900 2.700 L1.200 8.400 L6.900 14.100 M14.900 2.700 L9.200 8.400 L14.900 14.100" fill="none" stroke="url(#gch)" stroke-width="2.200"/></svg></div>
<div class="a" style="left:824px;top:38px;width:266px;height:666px;border:1px solid #dcdcdc;"></div>
<div class="a" style="left:807.7px;top:48px;width:300px;text-align:center;letter-spacing:-0.117px;">ДБН В.2.6-98:2009</div>
<div class="a" style="left:804.7px;top:69px;width:300px;text-align:center;letter-spacing:-0.366px;">Назва</div>
<div class="inp" style="left:847px;top:85px;width:217px;height:19px;line-height:19px;padding-left:5px"><span style="letter-spacing:-0.028px">Фундаментна плита</span></div>
<div class="a" style="left:830.3px;top:114px;letter-spacing:0.114px;">Клас бетону</div>
<div class="cmb" style="left:936px;top:110px;width:104px;height:21px;line-height:20px;padding-left:3px"><span style="letter-spacing:-0.197px">C16/20</span><svg class="a" style="right:4px;top:7.5px" width="8" height="5" viewBox="0 0 8 5"><path d="M0.400 0.400 L4 4.200 L7.600 0.400" fill="none" stroke="#505050" stroke-width="1"/></svg></div>
<div class="a" style="left:1045px;top:111.5px;width:15.5px;height:17px;border:1px solid #c6c6c6;border-bottom-color:#b0b0b0;border-radius:3.5px;background:#fdfdfd;text-align:center;line-height:14px;font-size:14px">+</div>
<div class="a" style="left:1066px;top:112px;width:14.5px;height:16.5px;border:1px solid #e6e6e6;border-radius:3.5px;background:#f6f6f6;text-align:center;line-height:14px;color:#9a9a9a">-</div>
<div class="a" style="left:830.3px;top:139px;letter-spacing:0.096px;">Заповнювач</div>
<div class="cmb" style="left:936px;top:134px;width:147px;height:21px;line-height:20px;padding-left:3px"><span style="letter-spacing:0.041px">силікатний заповнювач</span><svg class="a" style="right:4px;top:7.5px" width="8" height="5" viewBox="0 0 8 5"><path d="M0.400 0.400 L4 4.200 L7.600 0.400" fill="none" stroke="#505050" stroke-width="1"/></svg></div>
<div class="a" style="left:805.1px;top:157px;width:300px;text-align:center;letter-spacing:-0.141px;">Діаграма напруження-деформація</div>
<div class="cmb" style="left:837px;top:172px;width:239px;height:21px;line-height:20px;padding-left:3.5px"><span style="display:inline-block;width:215px;overflow:hidden;vertical-align:top;letter-spacing:-0.110px">2-лінійна діаграма напруження-деформація</span><svg class="a" style="right:4px;top:7.5px" width="8" height="5" viewBox="0 0 8 5"><path d="M0.400 0.400 L4 4.200 L7.600 0.400" fill="none" stroke="#505050" stroke-width="1"/></svg></div>
<div class="a" style="left:830.3px;top:199px;letter-spacing:0.079px;">Відносна вологість повітря, %</div>
<div class="inp" style="left:1048px;top:200px;width:37px;height:19px;line-height:19px;padding-left:4.500px">80</div>
<div class="a" style="left:827.6px;top:223px;letter-spacing:0.031px;">Коеф., що враховує тривалість дії</div>
<div class="a" style="left:827.6px;top:235.5px;letter-spacing:0.163px;">навантажень (стиск)</div>
<div class="a" style="left:1030.3px;top:222.1px;font-family:'Liberation Serif','DejaVu Serif',serif;font-size:21px;line-height:21px;color:#383838;">α</div>
<div class="a" style="left:1040.3px;top:234.4px;font-size:11px;line-height:13px;color:#383838">cc</div>
<div class="inp" style="left:1053px;top:226px;width:30px;height:19px;line-height:19px;padding-left:5.500px">1</div>
<div class="a" style="left:827.6px;top:251px;letter-spacing:0.031px;">Коеф., що враховує тривалість дії</div>
<div class="a" style="left:827.6px;top:263.5px;letter-spacing:0.187px;">навантажень (розтяг)</div>
<div class="a" style="left:1030.3px;top:250.1px;font-family:'Liberation Serif','DejaVu Serif',serif;font-size:21px;line-height:21px;color:#383838;">α</div>
<div class="a" style="left:1040.3px;top:262.4px;font-size:11px;line-height:13px;color:#383838">ct</div>
<div class="inp" style="left:1053px;top:254px;width:30px;height:19px;line-height:19px;padding-left:5.500px">1</div>
<div class="a" style="left:827.6px;top:278px;letter-spacing:0.080px;">Коеф., що враховує руйнування</div>
<div class="a" style="left:827.6px;top:290.5px;letter-spacing:0.126px;">бетонних конструкцій</div>
<div class="a" style="left:1032.3px;top:276.2px;font-family:'Liberation Serif','DejaVu Serif',serif;font-size:18.5px;line-height:21px;color:#383838;">γ</div>
<div class="a" style="left:1038.3px;top:289.7px;font-size:11px;line-height:13px;color:#383838">c2</div>
<div class="inp" style="left:1053px;top:282px;width:30px;height:19px;line-height:19px;padding-left:4.500px">0.9</div>
<div class="a" style="left:827.6px;top:306px;letter-spacing:0.183px;">Коеф. для конструкцій, які бетонуются</div>
<div class="a" style="left:827.6px;top:318.5px;letter-spacing:0.002px;">у вертикальному положенні</div>
<div class="a" style="left:1032.3px;top:303.2px;font-family:'Liberation Serif','DejaVu Serif',serif;font-size:18.5px;line-height:21px;color:#383838;">γ</div>
<div class="a" style="left:1038.3px;top:316.7px;font-size:11px;line-height:13px;color:#383838">c3</div>
<div class="inp" style="left:1053px;top:309px;width:30px;height:19px;line-height:19px;padding-left:5.500px">1</div>
<div class="a" style="left:828.1px;top:334px;letter-spacing:0.092px;">Граничне значення параметра (т.6.12</div>
<div class="a" style="left:828.1px;top:346.5px;letter-spacing:-0.081px;">ДБН В.1.1-12:2014)</div>
<div class="a" style="left:1035.3px;top:331.4px;font-family:'Liberation Serif','DejaVu Serif',serif;font-size:18.5px;line-height:21px;color:#383838;">γ</div>
<div class="inp" style="left:1053px;top:335px;width:30px;height:19px;line-height:19px;padding-left:4.500px">0.8</div>
<div class="a" style="left:830px;top:366px;width:255px;height:55px;border:1px solid #dcdcdc;"></div>
<div class="a" style="left:852.8px;top:361px;background:#f0f0f0;padding:0 2.500px;white-space:pre;letter-spacing:0.077px">Випадкові ексцентриситети  (стержень)</div>
<div class="a" style="left:838.8px;top:380.8px;letter-spacing:-0.240px;">По висоті перерізу EY</div>
<div class="inp" style="left:976px;top:378px;width:49px;height:19px;line-height:19px;padding-left:5px">0</div>
<div class="a" style="left:1033.8px;top:380.8px;">м</div>
<div class="a" style="left:838.8px;top:402px;letter-spacing:-0.276px;">По ширині перерізу EZ</div>
<div class="inp" style="left:976px;top:399px;width:49px;height:19px;line-height:19px;padding-left:5px">0</div>
<div class="a" style="left:1033.8px;top:400px;">м</div>
<div class="chk" style="left:831px;top:427px;"></div>
<div class="a" style="left:847.2px;top:427.5px;letter-spacing:0.080px;">Уточнювати схему утворення тріщин</div>
<div class="fr" style="left:827px;top:450px;width:260px;height:250px;background:#fff">
<div class="sb" style="left:241px;top:1px;width:16px;height:246px"></div>
<div class="sb" style="left:1px;top:231px;width:256px;height:16px"></div>
<div class="h" style="left:6px;top:1px;width:100px">Бетон</div>
<div class="h" style="left:123.5px;top:1px;width:110px">Од.Вим.: МПа</div>
<div class="hs" style="left:117px;top:1px;height:24px"></div>
<div class="a" style="left:5px;top:25px;width:113px;height:16px;background:#dcdcdc"></div>
<div class="a" style="left:119px;top:25px;width:121px;height:16px;background:#dcdcdc"></div>
<div class="c" style="left:6px;top:25px;width:110px">Ім&#x27;я</div>
<div class="c" style="left:124px;top:25px;width:110px">C16/20</div>
<div class="a" style="left:5px;top:42px;width:113px;height:16px;background:#dcdcdc"></div>
<div class="a" style="left:119px;top:42px;width:121px;height:16px;background:#dcdcdc"></div>
<div class="c" style="left:6px;top:42px;width:110px">f_ck_cube</div>
<div class="c" style="left:124px;top:42px;width:110px">20.00</div>
<div class="a" style="left:5px;top:59px;width:113px;height:16px;background:#dcdcdc"></div>
<div class="a" style="left:119px;top:59px;width:121px;height:16px;background:#dcdcdc"></div>
<div class="c" style="left:6px;top:59px;width:110px">f_ck_prizm</div>
<div class="c" style="left:124px;top:59px;width:110px">15.00</div>
<div class="a" style="left:5px;top:76px;width:113px;height:16px;background:#dcdcdc"></div>
<div class="a" style="left:119px;top:76px;width:121px;height:16px;background:#dcdcdc"></div>
<div class="c" style="left:6px;top:76px;width:110px">gama_c</div>
<div class="c" style="left:124px;top:76px;width:110px">1.30</div>
<div class="a" style="left:5px;top:93px;width:113px;height:16px;background:#dcdcdc"></div>
<div class="a" style="left:119px;top:93px;width:121px;height:16px;background:#dcdcdc"></div>
<div class="c" style="left:6px;top:93px;width:110px">f_ctm</div>
<div class="c" style="left:124px;top:93px;width:110px">1.90</div>
<div class="a" style="left:5px;top:110px;width:113px;height:16px;background:#dcdcdc"></div>
<div class="a" style="left:119px;top:110px;width:121px;height:16px;background:#dcdcdc"></div>
<div class="c" style="left:6px;top:110px;width:110px">f_ctk_005</div>
<div class="c" style="left:124px;top:110px;width:110px">1.30</div>
<div class="a" style="left:5px;top:127px;width:113px;height:16px;background:#dcdcdc"></div>
<div class="a" style="left:119px;top:127px;width:121px;height:16px;background:#dcdcdc"></div>
<div class="c" style="left:6px;top:127px;width:110px">f_ctk_095</div>
<div class="c" style="left:124px;top:127px;width:110px">2.50</div>
<div class="a" style="left:5px;top:144px;width:113px;height:16px;background:#dcdcdc"></div>
<div class="a" style="left:119px;top:144px;width:121px;height:16px;background:#dcdcdc"></div>
<div class="c" style="left:6px;top:144px;width:110px">gama_ct</div>
<div class="c" style="left:124px;top:144px;width:110px">1.50</div>
<div class="a" style="left:5px;top:161px;width:113px;height:16px;background:#dcdcdc"></div>
<div class="a" style="left:119px;top:161px;width:121px;height:16px;background:#dcdcdc"></div>
<div class="c" style="left:6px;top:161px;width:110px">E_cm</div>
<div class="c" style="left:124px;top:161px;width:110px">27000.00</div>
<div class="a" style="left:5px;top:178px;width:113px;height:16px;background:#dcdcdc"></div>
<div class="a" style="left:119px;top:178px;width:121px;height:16px;background:#dcdcdc"></div>
<div class="c" style="left:6px;top:178px;width:110px">E_ck</div>
<div class="c" style="left:124px;top:178px;width:110px">23000.00</div>
<div class="a" style="left:5px;top:195px;width:113px;height:16px;background:#dcdcdc"></div>
<div class="a" style="left:119px;top:195px;width:121px;height:16px;background:#dcdcdc"></div>
<div class="c" style="left:6px;top:195px;width:110px">E_cd</div>
<div class="c" style="left:124px;top:195px;width:110px">20000.00</div>
<div class="a" style="left:5px;top:212px;width:113px;height:16px;background:#dcdcdc"></div>
<div class="a" style="left:119px;top:212px;width:121px;height:16px;background:#dcdcdc"></div>
<div class="c" style="left:6px;top:212px;width:110px"><span style="letter-spacing:-0.115px">Eps_c1_ck (*1000)</span></div>
<div class="c" style="left:124px;top:212px;width:110px">1.66</div>
<div class="th" style="left:248px;top:18px;width:2px;height:122px"></div>
<div class="th" style="left:18px;top:238px;width:188px;height:2px"></div>
</div>
</div></body></html>
